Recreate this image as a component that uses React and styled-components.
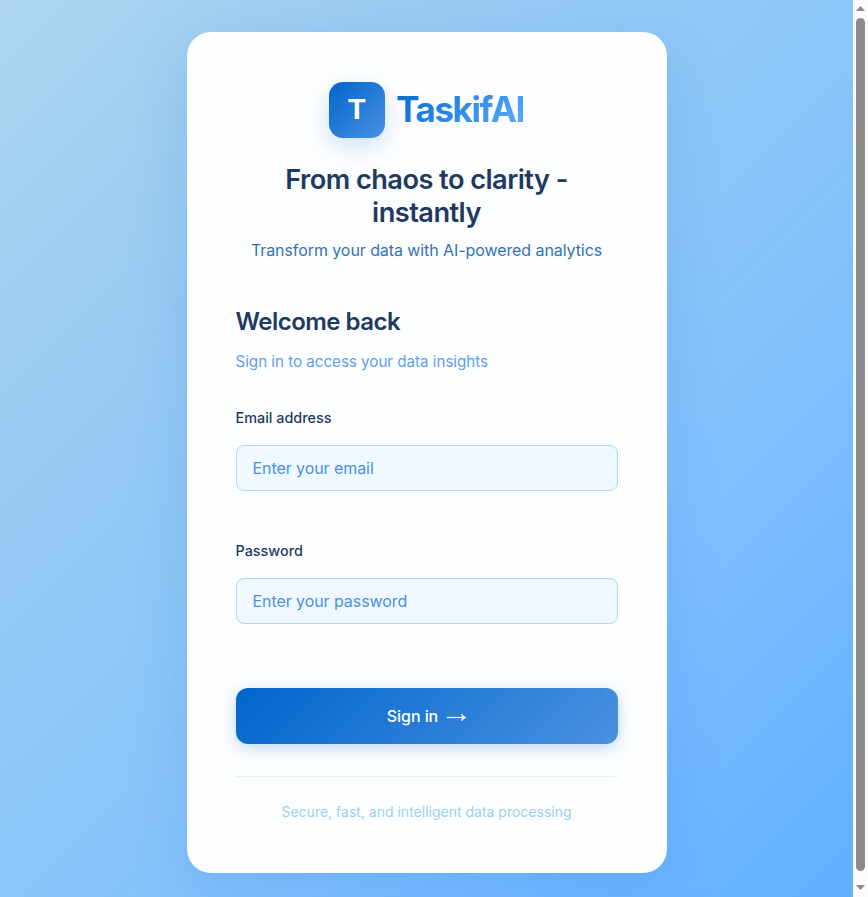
import React from "react";
import styled, { createGlobalStyle } from "styled-components";

const GlobalStyle = createGlobalStyle`
  * { box-sizing: border-box; }
  html, body { margin: 0; height: 897px; overflow: hidden; }
  body { font-family: Inter, sans-serif; }
`;

const Window = styled.div`
  display: flex;
  height: 897px;
`;

const Page = styled.main`
  flex: 1;
  height: 897px;
  padding: 32px 0;
  overflow: hidden;
  display: flex;
  justify-content: center;
  align-items: flex-start;
  background: linear-gradient(135deg, #aed6f1 0%, #9dcdf1 20%, #8cc5f8 50%, #7fbfff 69%, #60afff 100%);
`;

const Card = styled.section`
  width: 480px;
  height: 841px;
  flex-shrink: 0;
  padding: 50px 49px 0;
  border-radius: 24px;
  background: #fdfeff;
  box-shadow: 0 16px 56px rgba(0, 102, 204, 0.15);
`;

const Brand = styled.div`
  display: flex;
  justify-content: center;
  align-items: center;
  gap: 11px;
  height: 56px;
`;

const LogoTile = styled.div`
  width: 56px;
  height: 56px;
  padding: 0 1px 2px 0;
  display: flex;
  align-items: center;
  justify-content: center;
  border-radius: 14px;
  color: #fff;
  font-family: "Liberation Sans", sans-serif;
  font-size: 28.8px;
  font-weight: 700;
  background: linear-gradient(135deg, #0066cc, #4a90e2);
  box-shadow: 0 8px 24px rgba(0, 102, 204, 0.2);
`;

const BrandName = styled.span`
  margin-bottom: 2px;
  font-size: 35.2px;
  font-weight: 700;
  letter-spacing: -1.55px;
  line-height: 54px;
  background: linear-gradient(135deg, #0066cc, #60afff);
  background-clip: text;
  -webkit-background-clip: text;
  color: transparent;
`;

const Headline = styled.h1`
  margin: 26px 0 0;
  color: #1e3a5f;
  font-size: 27.2px;
  font-weight: 600;
  line-height: 32.64px;
  letter-spacing: -0.544px;
  text-align: center;
`;

const Tagline = styled.p`
  margin: 7.7px 0 0;
  color: #3572b5;
  font-size: 16px;
  line-height: 26px;
  letter-spacing: -0.08px;
  text-align: center;
`;

const Welcome = styled.h2`
  margin: 41px 0 0;
  color: #1e3a5f;
  font-size: 24px;
  font-weight: 600;
  line-height: 36px;
  letter-spacing: -0.52px;
`;

const Hint = styled.p`
  margin: 10px 0 0;
  color: #5f9fec;
  font-size: 15.2px;
  line-height: 24px;
  letter-spacing: -0.03px;
`;

const Form = styled.form`
  display: flex;
  flex-direction: column;
  margin-top: 32px;
`;

const Field = styled.label`
  display: flex;
  flex-direction: column;
  gap: 15px;
  height: 133px;
  color: #1e3a5f;
  font-size: 14.4px;
  font-weight: 500;
  line-height: 24px;
`;

const Input = styled.input`
  height: 46px;
  width: 100%;
  padding: 0 16px;
  border: 1px solid #add8f0;
  border-radius: 8px;
  background: #f0f8ff;
  font: 400 16px Inter, sans-serif;
  letter-spacing: -0.07px;
  outline: none;
  &::placeholder { color: #4a90e2; opacity: 1; }
`;

const Submit = styled.button`
  display: flex;
  align-items: center;
  justify-content: center;
  gap: 9px;
  height: 56px;
  margin-top: 16px;
  padding: 0;
  border: 0;
  border-radius: 12px;
  color: #fff;
  font: 500 16px Inter, sans-serif;
  letter-spacing: -0.08px;
  background: linear-gradient(135deg, #0066cc, #4a90e2);
  box-shadow: 0 4px 16px rgba(0, 102, 204, 0.25);
`;

const Footer = styled.footer`
  margin-top: 32px;
  padding-top: 24px;
  border-top: 1px solid #e0f4fb;
  color: #9bd0ee;
  font-size: 14px;
  line-height: 22px;
  text-align: center;
`;

const Scrollbar = styled.div`
  width: 15px;
  flex-shrink: 0;
  display: flex;
  flex-direction: column;
  align-items: center;
  padding: 6px 0 7px;
  background: #fcfcfc;
`;

const Thumb = styled.div`
  width: 9px;
  height: 853px;
  margin: 7px 0 14px;
  border-radius: 5px;
  background: #8b8b8b;
`;

const ScrollArrow = styled.svg`
  flex-shrink: 0;
`;

const LongArrow = styled.svg`
  margin-top: 3px;
`;

const Arrow = ({ down }) => (
  <ScrollArrow width="9" height="5" viewBox="0 0 9 5">
    <path d={down ? "M0 0h9L4.5 5z" : "M0 5h9L4.5 0z"} fill="#8b8b8b" />
  </ScrollArrow>
);

export default function App() {
  return (
    <Window>
      <GlobalStyle />
      <Page>
        <Card>
          <Brand>
            <LogoTile>T</LogoTile>
            <BrandName>TaskifAI</BrandName>
          </Brand>
          <Headline>From chaos to clarity - instantly</Headline>
          <Tagline>Transform your data with AI-powered analytics</Tagline>
          <Welcome>Welcome back</Welcome>
          <Hint>Sign in to access your data insights</Hint>
          <Form>
            <Field>
              Email address
              <Input type="email" placeholder="Enter your email" />
            </Field>
            <Field>
              Password
              <Input type="password" placeholder="Enter your password" />
            </Field>
            <Submit type="button">
              <span>Sign in</span>
              <LongArrow width="19" height="9" viewBox="0 0 19 9" fill="none" stroke="#fff" strokeWidth="1.2">
                <path d="M0 4.5h17.500" />
                <path d="M14.500 1.200q1 2.300 3.300 3.300q-2.300 1-3.300 3.300" strokeWidth="1.4" />
              </LongArrow>
            </Submit>
          </Form>
          <Footer>Secure, fast, and intelligent data processing</Footer>
        </Card>
      </Page>
      <Scrollbar>
        <Arrow />
        <Thumb />
        <Arrow down />
      </Scrollbar>
    </Window>
  );
}
